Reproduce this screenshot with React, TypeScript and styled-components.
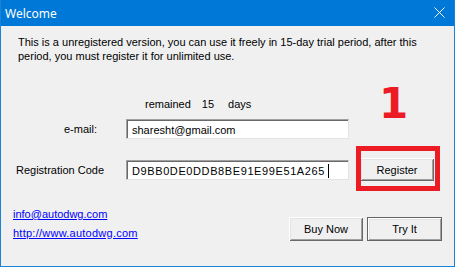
import React from 'react';
import styled, { createGlobalStyle } from 'styled-components';

const GlobalStyle = createGlobalStyle`
  html, body {
    margin: 0;
    padding: 0;
    background: #f0f0f0;
  }
`;

const Window = styled.div`
  position: relative;
  box-sizing: border-box;
  width: 455px;
  height: 267px;
  border: 1px solid #1883d7;
  border-top: none;
  background: #f0f0f0;
  font-family: 'Liberation Sans', Arial, sans-serif;
  font-size: 11px;
  color: #000;
  display: flex;
  flex-direction: column;
  overflow: hidden;
`;

const TitleBar = styled.div`
  height: 26px;
  margin: 0 -1px;
  background: #0078d7;
  color: #fff;
  display: flex;
  align-items: center;
  justify-content: space-between;
  padding: 0 10px 0 5px;
  font-family: 'Noto Sans', 'Open Sans', sans-serif;
  font-size: 12px;
`;

const CloseIcon = styled.svg`
  width: 11px;
  height: 11px;
  margin-top: -1px;
`;

const Content = styled.div`
  flex: 1;
  display: flex;
  flex-direction: column;
  padding: 9px 12px 0 12px;
`;

const Intro = styled.p`
  margin: 0 0 0 5px;
  line-height: 14px;
`;

const Remained = styled.div`
  display: flex;
  margin: 34px 0 0 132px;
  line-height: 14px;
  gap: 11px;
`;

const Num = styled.span`
  padding-right: 3px;
`;

const FieldRow = styled.div<{ $top: number }>`
  display: flex;
  align-items: center;
  margin-top: ${({ $top }) => $top}px;
`;

const Label = styled.label<{ $align: 'left' | 'right' }>`
  width: 113px;
  box-sizing: border-box;
  text-align: ${({ $align }) => $align};
  padding: ${({ $align }) => ($align === 'right' ? '0 29px 0 0' : '0 0 0 3px')};
`;

const Input = styled.div<{ $spacing?: number }>`
  box-sizing: border-box;
  width: 223px;
  height: 20px;
  background: #fff;
  border-top: 1px solid #a0a0a0;
  border-left: 1px solid #a0a0a0;
  border-right: 1px solid #e3e3e3;
  border-bottom: 1px solid #e3e3e3;
  box-shadow: inset 1px 1px 0 #696969;
  padding: 3px 0 0 5px;
  font-size: 11px;
  line-height: 14px;
  letter-spacing: ${({ $spacing }) => $spacing ?? 0}px;
  white-space: nowrap;
  display: flex;
  align-items: flex-start;
`;

const Caret = styled.span`
  display: inline-block;
  width: 1px;
  height: 14px;
  background: #000;
  margin-left: 3px;
`;

const Button = styled.button<{ $default?: boolean; $width?: number }>`
  box-sizing: border-box;
  width: ${({ $width }) => $width ?? 74}px;
  height: 24px;
  padding: 0;
  background: #f0f0f0;
  font-family: 'Liberation Sans', Arial, sans-serif;
  font-size: 11px;
  color: #000;
  border: none;
  box-shadow: ${({ $default }) =>
    $default
      ? 'inset 1px 1px 0 #646464, inset -1px -1px 0 #646464, inset 2px 2px 0 #fff, inset -2px -2px 0 #a0a0a0, inset 3px 3px 0 #e3e3e3'
      : 'inset 1px 1px 0 #fff, inset -1px -1px 0 #696969, inset 2px 2px 0 #e3e3e3, inset -2px -2px 0 #a0a0a0'};
`;

const RegisterButton = styled(Button)`
  margin-left: 11px;
  height: 23px;
`;

const Footer = styled.div`
  display: flex;
  justify-content: space-between;
  align-items: flex-start;
  margin-top: 24px;
`;

const Links = styled.div`
  display: flex;
  flex-direction: column;
  line-height: 19px;
`;

const WebLink = styled.a<{ $spacing?: number }>`
  color: #0000ff;
  text-decoration: underline;
  width: fit-content;
  letter-spacing: ${({ $spacing }) => $spacing ?? 0}px;
`;

const Buttons = styled.div`
  display: flex;
  gap: 4px;
  margin-top: 12px;
`;

const Highlight = styled.div`
  position: absolute;
  left: 355px;
  top: 146px;
  width: 84px;
  height: 45px;
  box-sizing: border-box;
  border: 5px solid #ed1c24;
  pointer-events: none;
`;

const StepNumber = styled.div`
  position: absolute;
  left: 378px;
  top: 83px;
  font-family: 'DejaVu Sans', sans-serif;
  font-weight: bold;
  font-size: 42px;
  line-height: 1;
  color: #ed1c24;
`;

const App: React.FC = () => {
  return (
    <>
      <GlobalStyle />
      <Window>
        <TitleBar>
          <span>Welcome</span>
          <CloseIcon viewBox="0 0 11 11">
            <path d="M0.5 0.5 L10.5 10.5 M10.5 0.5 L0.5 10.5" stroke="#fff" strokeWidth="1" />
          </CloseIcon>
        </TitleBar>
        <Content>
          <Intro>
            This is a unregistered version, you can use it freely in 15-day trial period, after this
            <br />
            period, you must register it for unlimited use.
          </Intro>
          <Remained>
            <span>remained</span>
            <Num>15</Num>
            <span>days</span>
          </Remained>
          <FieldRow $top={8}>
            <Label $align="right">e-mail:</Label>
            <Input>sharesht@gmail.com</Input>
          </FieldRow>
          <FieldRow $top={19}>
            <Label $align="left">Registration Code</Label>
            <Input $spacing={0.6}>
              D9BB0DE0DDB8BE91E99E51A265
              <Caret />
            </Input>
            <RegisterButton>Register</RegisterButton>
          </FieldRow>
          <Footer>
            <Links>
              <WebLink href="#">info@autodwg.com</WebLink>
              <WebLink href="#" $spacing={0.25}>http://www.autodwg.com</WebLink>
            </Links>
            <Buttons>
              <Button>Buy Now</Button>
              <Button $default $width={75}>Try It</Button>
            </Buttons>
          </Footer>
        </Content>
        <Highlight />
        <StepNumber>1</StepNumber>
      </Window>
    </>
  );
};

export default App;
